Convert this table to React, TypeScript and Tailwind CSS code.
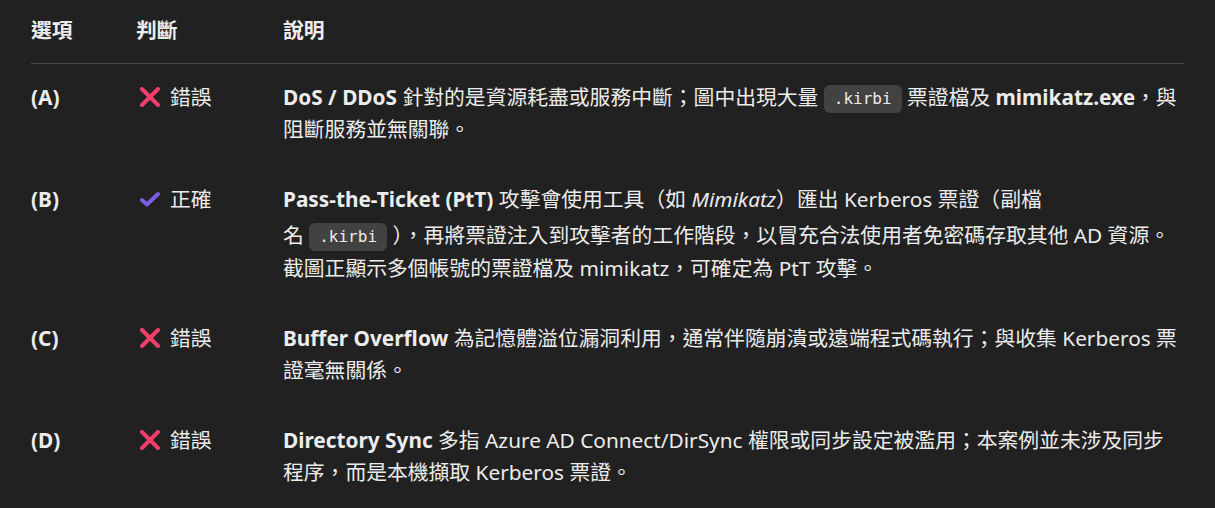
const font = { fontFamily: '"Noto Sans", "Noto Sans CJK TC", sans-serif' };

function Cross() {
  return (
    <svg width="22" height="20" viewBox="0 0 22 20" className="shrink-0">
      <path d="M3 2 L19 18 M19 2 L3 18" stroke="#f23d6a" strokeWidth="4" strokeLinecap="round" />
    </svg>
  );
}

function Check() {
  return (
    <svg width="22" height="16" viewBox="0 0 22 16" className="shrink-0">
      <path d="M3 9 L8 13.5 L19 3" stroke="#7c5ce4" strokeWidth="4" strokeLinecap="round" strokeLinejoin="round" fill="none" />
    </svg>
  );
}

function Code({ children }: { children: string }) {
  return (
    <code className="inline-block rounded-md bg-[#424242] px-[10px] text-[16px] leading-[28px] text-[#ececec] align-middle" style={{ fontFamily: '"DejaVu Sans Mono", monospace' }}>
      {children}
    </code>
  );
}

const rows = [
  {
    opt: "(A)",
    ok: false,
    lines: [
      <>
        <b>DoS / DDoS</b> 針對的是資源耗盡或服務中斷；圖中出現大量 <Code>.kirbi</Code> 票證檔及 <b>mimikatz.exe</b>，與
      </>,
      <>阻斷服務並無關聯。</>,
    ],
  },
  {
    opt: "(B)",
    ok: true,
    lines: [
      <>
        <b>Pass-the-Ticket (PtT)</b> 攻擊會使用工具（如 <i>Mimikatz</i>）匯出 Kerberos 票證（副檔
      </>,
      <>
        名 <Code>.kirbi</Code> ），再將票證注入到攻擊者的工作階段，以冒充合法使用者免密碼存取其他 AD 資源。
      </>,
      <>截圖正顯示多個帳號的票證檔及 mimikatz，可確定為 PtT 攻擊。</>,
    ],
  },
  {
    opt: "(C)",
    ok: false,
    lines: [
      <>
        <b>Buffer Overflow</b> 為記憶體溢位漏洞利用，通常伴隨崩潰或遠端程式碼執行；與收集 Kerberos 票
      </>,
      <>證毫無關係。</>,
    ],
  },
  {
    opt: "(D)",
    ok: false,
    lines: [
      <>
        <b>Directory Sync</b> 多指 Azure AD Connect/DirSync 權限或同步設定被濫用；本案例並未涉及同步
      </>,
      <>程序，而是本機擷取 Kerberos 票證。</>,
    ],
  },
];

export default function App() {
  return (
    <div className="min-h-[508px] w-full bg-[#212121] text-[#ececec]" style={font}>
      <div className="px-[31px] pt-[14px]">
        <div className="grid grid-cols-[105px_147px_1fr] border-b border-[#4a4a4a] pb-[17px] text-[20.8px] font-bold leading-[32px]">
          <div>選項</div>
          <div>判斷</div>
          <div>說明</div>
        </div>
        {rows.map((r) => (
          <div key={r.opt} className="grid grid-cols-[105px_147px_1fr] pt-[17px] pb-[21px] text-[20.8px] leading-[32px]">
            <div className="font-bold">{r.opt}</div>
            <div className="flex h-[32px] items-center gap-[9px] pl-[3px]">
              {r.ok ? <Check /> : <Cross />}
              <span>{r.ok ? "正確" : "錯誤"}</span>
            </div>
            <div className="flex flex-col whitespace-nowrap">
              {r.lines.map((l, i) => (
                <div key={i} className={r.ok && i === 1 ? "h-[37px] pt-[4px]" : "h-[32px]"}>
                  {l}
                </div>
              ))}
            </div>
          </div>
        ))}
      </div>
    </div>
  );
}
